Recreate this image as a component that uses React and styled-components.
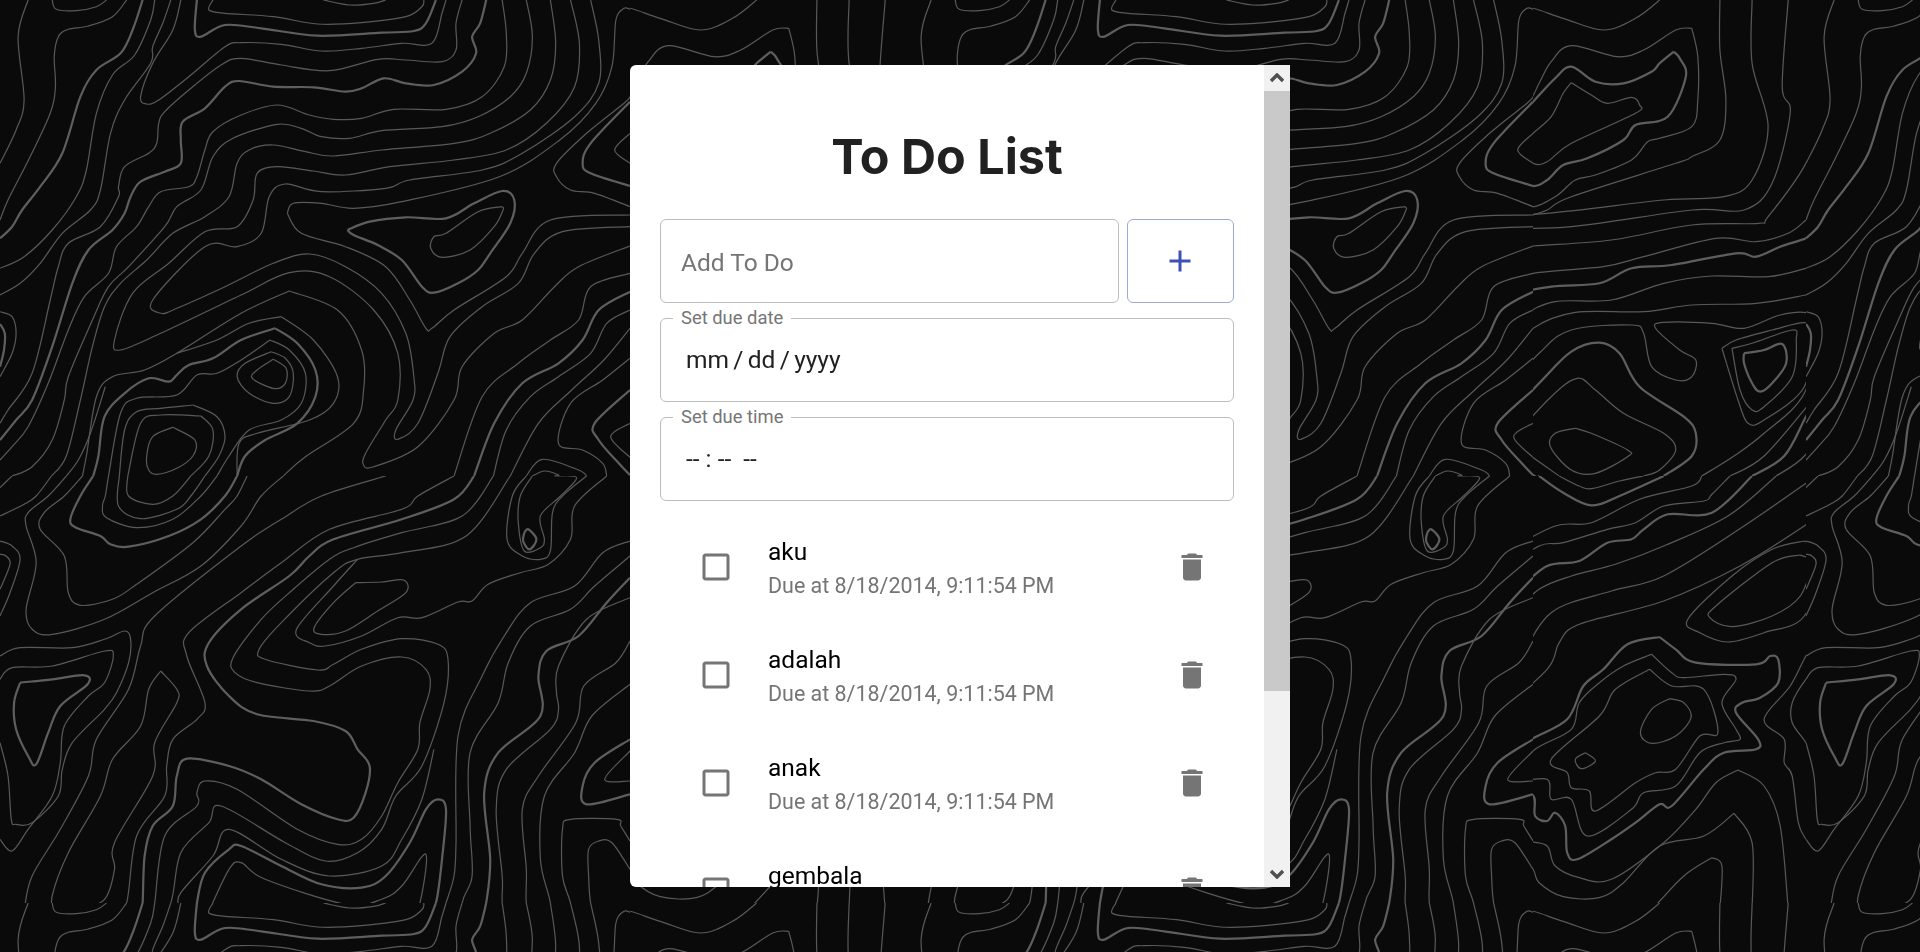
import React from "react";
import styled, { createGlobalStyle } from "styled-components";

// contour lines of the background, traced per crop. "*" marks the heavier lines
const TOPO_A = [
  "70,0 45,110 60,300 40,390 0,490",
  "130,0 140,28 190,32 240,20 265,0",
  "315,0 280,50 220,78 170,88 145,110 135,170 138,260 125,340 75,470 20,600 0,660",
  "*355,0 330,90 300,160 240,210 200,290 155,460 100,560 55,630 30,680 0,715",
  "385,0 375,60 335,165 280,225 240,340 215,510 190,590 130,690 60,770 0,805",
  "425,0 405,70 380,140 375,190 310,300 275,400 250,570 225,630 155,700 100,790 50,850 0,885",
  "450,0 430,90 380,190 350,290 365,312 395,300 470,230 560,140 600,128 700,133 800,153 900,145 1000,130 1075,130 1100,40 1110,0",
  "*490,0 485,90 500,110 560,75 650,85 790,107 950,98 1030,93 1060,70 1085,0",
  "530,0 520,30 560,40 680,50 790,72 900,68 1010,50 1050,20 1055,0",
  "805,0 870,15 930,10 960,0",
  "1150,0 1135,70 1135,150 1100,185 1010,180 940,178 820,212 700,195 600,175 550,195 470,270 410,335 395,370 390,430 370,460 310,500 295,560 295,590 250,680 170,730 145,800 125,900 80,1120 20,1230 0,1270",
  "*1210,0 1195,70 1175,110 1185,160 1150,215 1080,255 1010,250 955,235 900,265 860,275 780,262 680,260 595,243 560,260 510,325 455,365 450,420 450,490 410,515 350,545 325,590 310,640 280,690 220,750 180,850 130,1040 80,1200 40,1260 0,1320",
  "1250,0 1260,100 1255,200 1200,290 1110,328 980,328 900,355 830,358 770,345 690,315 600,345 530,395 510,450 490,530 470,560 400,575 370,620 340,680 290,740 270,820 210,890 170,990 120,1150 70,1280 30,1340 0,1380",
  "1310,0 1325,110 1310,220 1270,290 1190,350 1100,380 950,392 870,415 800,410 750,385 690,373 580,415 530,470 500,570 440,620 410,680 320,800 270,860 230,960 170,1130 160,1200 130,1320 80,1400 30,1428",
  "1370,0 1383,130 1370,240 1320,330 1220,400 1130,430 950,450 830,468 760,455 680,435 620,450 590,490 570,590 510,650 430,700 365,780 300,850 260,920 230,1040 200,1200 165,1368 128,1428",
  "262,1160 225,1300 195,1380 165,1428",
  "1420,0 1442,130 1430,260 1360,370 1260,450 1130,480 970,500 860,525 780,513 690,500 640,520 630,600 590,680 510,695 420,790 330,880 285,1020 300,1050 400,1000 600,885 720,818 820,830 930,930 990,1060 990,1200 960,1260 910,1360 905,1395 930,1400 1040,1340 1130,1200 1150,1100 1230,1000 1300,960 1380,860 1440,800 1568,738",
  "1470,0 1490,120 1490,250 1430,350 1300,460 1200,510 1020,540 960,565 800,575 710,552 670,590 650,700 590,740 510,740 380,900 400,940 440,925 560,860 680,790 770,762 860,800 950,880 1010,1000 1030,1130 1028,1200 985,1290 990,1318 1040,1270 1090,1120 1120,1010 1200,920 1290,850 1330,760 1400,695 1568,680",
  "*1568,305 1470,430 1450,490 1470,520 1568,558",
  "1568,400 1530,450 1568,490",
  "1568,620 1480,580 1420,570 1385,530 1385,490 1460,400 1553,310 1568,290",
  "715,640 730,610 800,610 880,625 1000,605 1243,530 1393,420 1483,310 1523,200 1533,60 1553,25 1568,28",
  "715,640 750,700 860,740 960,800 1020,900 1060,985 1075,985 1130,930 1260,830 1300,760 1370,660 1568,645",
  "720,873 600,940 440,1060 360,1110 280,1130 240,1190 215,1368 205,1428",
  "720,873 840,930 900,1050 905,1170 880,1270 760,1370 705,1428",
  "700,950 620,970 540,1020 440,1060",
  "700,950 780,1020 840,1130 830,1210 770,1260 640,1300 595,1330 590,1428",
  "*685,985 600,1020 530,1075 470,1095 440,1125 420,1145 370,1135 310,1180 260,1250 245,1368 232,1428",
  "*685,985 740,1030 785,1110 785,1190 740,1270 660,1320 610,1368 590,1428",
  "672,1020 600,1080 540,1120 490,1125 440,1185 340,1195 300,1240 270,1428",
  "672,1020 720,1050 760,1120 750,1210 700,1260 620,1290 570,1368 540,1428",
  "675,1055 610,1090 590,1130 620,1180 680,1210 720,1190 730,1120 710,1075 675,1055",
  "680,1078 640,1110 628,1135 680,1165 710,1150 712,1105 680,1078",
  "480,1215 400,1225 340,1235 310,1290 297,1428",
  "480,1215 540,1250 560,1310 545,1368 510,1428",
  "500,1248 400,1245 350,1270 318,1428",
  "500,1248 530,1290 520,1368 475,1428",
  "430,1282 380,1310 365,1368 370,1410 390,1423 440,1405 480,1368 485,1320 430,1282",
  "*865,690 920,665 1010,652 1110,655 1180,610 1250,573 1280,600 1270,670 1220,760 1190,810 1140,850 1080,878 1050,860 1000,780 940,735 880,705 865,690",
  "1250,620 1190,635 1110,700 1080,710 1072,745 1100,772 1170,750 1230,680 1252,630 1250,620",
  "0,935 30,950 40,1000 30,1060 0,1130",
  "*0,972 12,1000 10,1050 0,1100",
  "*1568,875 1490,930 1450,1020 1390,1090 1300,1150 1230,1270 1180,1428",
  "1568,820 1470,860 1440,960 1370,1020 1290,1090 1200,1190 1130,1428",
  "1568,930 1510,970 1470,1060 1390,1130 1320,1190 1260,1290 1228,1428",
  "1568,985 1503,1080 1423,1170 1340,1270 1270,1428",
  "1568,1075 1500,1140 1420,1210 1390,1330 1450,1350 1500,1390 1510,1428",
  "*1568,1170 1480,1270 1490,1320 1540,1390 1568,1425",
  "1568,1270 1520,1310 1568,1372",
  "1310,1428 1350,1378 1440,1410 1460,1428",
  "1325,1428 1355,1413 1390,1425 1380,1428",
];

const TOPO_B = [
  "*232,0 200,60 175,130 190,155 250,180 275,205 320,212 420,180 500,130 560,60 590,0",
  "0,420 25,350 50,250 30,210 0,195",
  "0,340 25,265 15,240 0,235",
  "0,35 30,0",
  "0,120 60,85 90,60 128,0",
  "205,0 160,60 110,110 100,160 160,240 170,350 200,388 280,370 340,325 480,200 560,100 590,60 615,0",
  "165,0 120,60 70,110 65,150 90,260 65,400 80,460 130,475 260,430 380,350 500,270 600,150 650,60 705,0",
  "318,0 320,60 380,85 430,60 475,0",
  "297,0 295,90 350,128 440,100 475,60 510,0",
  "270,0 262,60 255,90 265,125 340,155 430,130 500,60 540,0",
  "0,540 50,515 180,515 260,490 310,465 325,490 320,560 290,650 260,700 180,800 155,880 145,960 80,1040 40,1045 28,1030 20,900 0,800",
  "0,610 30,575 130,570 260,525 282,540 260,620 220,660 160,750 150,860 130,960 70,1060 30,1125 0,1090",
  "*50,620 130,610 210,598 218,625 150,690 120,770 90,865 70,840 40,760 35,680 50,620",
  "400,585 370,640 350,750 280,850 250,960 170,1130 130,1260 140,1295 190,1303 260,1270 285,1180 285,1100 380,900 385,800 440,680 440,640 400,585",
  "960,0 800,60 700,130 600,210 385,420 350,510 320,640 240,790 220,900 150,1060 80,1200 60,1300 45,1380 60,1428",
  "1130,0 1040,60 1000,100 820,160 700,260 600,350 470,470 465,540 510,680 490,730 430,790 415,870 410,960 340,1080 315,1281 280,1331 220,1359 170,1369 145,1391",
  "*1180,0 1130,70 1000,130 830,190 770,240 720,300 600,400 520,500 515,570 570,660 640,715 780,735 860,765 890,820 920,870 910,950 880,1025 840,1030 750,985 650,910 570,870 465,848 440,900 430,990 380,1050 360,1140 355,1281 350,1300 310,1428",
  "1228,0 1150,120 1000,170 880,215 820,250 730,340 650,430 580,545 585,590 640,620 770,645 820,630 900,570 1000,543 1060,580 1070,640 1045,740 1040,820 990,920 950,1020 900,1090 840,1105 740,1060 590,940 510,915 490,950 490,990 410,1080 385,1281 375,1341 335,1446",
  "1270,0 1160,180 1000,230 890,250 830,290 700,440 645,520 660,550 790,582 830,565 900,520 1000,488 1090,505 1115,550 1105,680 1050,870 985,960 950,1060 890,1130 810,1155 710,1100 550,990 520,1040 450,1130 425,1281 370,1428",
  "885,320 950,318 1005,312 1010,350 940,405 860,465 800,475 782,455 830,380 885,320",
  "1510,0 1430,90 1420,190 1365,265 1295,290 1215,325 1175,375 1140,378 1050,425 990,425 900,480 810,510 770,500 738,460 830,330 890,250",
  "*1305,170 1315,160 1335,190 1318,220 1302,195 1305,170",
  "1310,0 1275,60 1262,190 1300,240 1345,250 1370,225 1375,110 1400,60 1460,0",
  "1325,0 1295,60 1290,140 1305,225 1345,215 1355,190 1345,120 1395,60 1435,5 1380,0",
  "1568,195 1500,230 1430,330 1320,380 1255,480 1200,600 1140,780 1135,1100 1130,1200 1110,1281 1100,1321 1075,1411",
  "1568,240 1480,330 1420,400 1320,450 1265,560 1240,680 1170,830 1170,1050 1175,1200 1150,1281 1135,1428",
  "*1568,305 1510,380 1440,480 1360,525 1340,600 1345,720 1240,830 1205,950 1220,1150 1210,1281 1195,1351 1175,1391",
  "1568,365 1460,430 1390,570 1385,650 1390,700 1370,760 1260,880 1235,1000 1250,1200 1250,1281 1260,1381",
  "1568,495 1533,560 1453,630 1433,740 1340,900 1300,1000 1310,1180 1310,1281 1325,1391",
  "1568,625 1473,720 1430,830 1355,960 1345,1150 1370,1281 1383,1411",
  "*1568,790 1480,860 1450,930 1460,985 1568,955",
  "1568,825 1505,910 1568,915",
  "1568,1095 1545,1050 1535,1030 1420,1030 1400,1060 1400,1200 1420,1281 1442,1411",
  "1568,1180 1523,1100 1490,1095 1465,1120 1465,1200 1470,1281 1490,1401",
  "1568,1295 1545,1320 1550,1428",
  "*480,1370 500,1380 550,1350 800,1375 1020,1365 1060,1330 1085,1281 1100,1150 1110,1000 1090,970 1060,1000 1020,1100 960,1200 900,1235 800,1225 700,1170 600,1110 570,1120 510,1190 490,1281 480,1370",
  "520,1305 700,1320 800,1345 1000,1325 1040,1300 1060,1135 1000,1230 950,1270 860,1285 660,1210 600,1160 570,1180 520,1305",
  "445,1290 450,1250 530,1140 570,1060 700,1150 820,1200 950,1170 1000,1090 1050,970 1080,820",
  "540,1428 600,1400 800,1410 1075,1411",
];

const TOPO_C = [
  "560,200 570,60 590,22 680,55 780,90 860,55 920,0",
  "1000,85 960,90 880,150 815,170 700,137 650,185 620,250 590,310 500,390 410,520 440,570 500,580 590,622 660,590 710,540 760,525 850,480 890,425 920,415 1000,380 1015,300 1015,170 1000,85",
  "*955,155 920,190 900,215 830,250 760,245 700,200 660,235 605,305 507,430 480,490 520,530 600,558 640,540 680,495 740,475 830,420 860,375 940,350 985,230 970,175 955,155",
  "700,248 680,280 650,350 605,400 560,450 605,490 640,485 700,430 860,340 870,315 850,292 790,310 750,285 700,248",
  "1070,0 1070,150 1085,300 1070,420 1000,470 960,490 700,590 640,630 590,650",
  "1150,0 1150,190 1190,380 1150,540 1080,590 930,600 640,640 410,652",
  "1240,0 1225,260 1245,340 1200,550 1130,630 1000,630 700,680 500,685",
  "1354,0 1330,110 1345,300 1284,490 1190,650 1165,670 1000,675 800,720 605,738 500,750",
  "1284,660 1240,700 1160,725 1060,715 880,770 780,800 605,820 510,860 480,900 470,970 430,1030 360,1070",
  "*1300,700 1284,715 1220,740 1160,770 1110,760 950,795 850,805 770,850 650,860 560,890 490,990 480,1040 400,1100",
  "1300,800 1284,805 1190,830 1050,828 930,850 800,900 660,905 580,950 530,1040 480,1100",
  "1300,880 1284,885 1160,910 1000,915 880,935 710,937 605,985 540,1080 460,1170",
  "500,1220 620,1060 700,990 850,975 880,1000 900,1100 960,1140 1000,1130 1010,1080 970,1050 910,985 930,967 1050,970 1130,985 1220,945 1290,940 1312,985 1280,1180 1180,1300 1105,1368 1025,1428",
  "1075,1045 1110,1020 1200,990 1280,968 1295,1000 1280,1160 1180,1260 1140,1270 1115,1200 1075,1045",
  "1100,1045 1150,1030 1250,990 1260,1020 1250,1130 1180,1220 1150,1230 1120,1170 1100,1045",
  "*1130,1060 1180,1050 1225,1032 1235,1090 1200,1150 1170,1175 1150,1150 1130,1090 1130,1060",
  "*510,1290 620,1150 700,1055 770,1028 820,1060 870,1160 980,1250 1010,1300 1000,1368 930,1428",
  "*510,1290 520,1340 605,1425 620,1428",
  "550,1320 650,1190 715,1135 760,1170 830,1240 930,1300 960,1350 920,1410 880,1428",
  "550,1320 590,1360 670,1428",
  "710,1285 660,1300 648,1340 700,1410 760,1420 840,1370 840,1350 750,1300 710,1285",
  "*1340,1120 1284,1250 1230,1368 1150,1428",
  "1300,1200 1180,1368 1095,1428",
  "1340,1250 1280,1368 1210,1428",
  "1400,1250 1365,1368 1310,1428",
];

const TOPO_D = [
  "*620,0 680,50 750,88 820,60 930,0",
  "670,0 720,30 750,38 820,15 880,0",
  "*1150,0 1050,110 940,115 880,160 850,190 790,200 720,255 640,270 570,340",
  "1210,0 1090,120 930,210 810,265 700,300 620,340 540,430",
  "1095,0 1050,55 1030,75 930,90 860,140 790,160 680,200 620,210 520,290",
  "1025,0 1000,30 870,70 750,140 660,150 530,230",
  "1310,0 1130,150 930,300 800,345 650,410 570,560",
  "1330,100 1280,150 1120,270 930,375 720,445 670,500 640,580 510,720",
  "*920,483 840,505 780,580 730,630 690,730 600,790 510,860 478,940 500,990 600,955 610,1020 640,1035 660,1010 685,1050 690,1130 715,1150 800,1090 860,1040 920,985 950,990 1030,880 1080,830 1160,820 1165,790 1110,710 1125,680 1170,665 1215,620 1215,550 1195,540 1160,565 1010,560 960,520 920,483",
  "900,535 830,570 770,620 720,680 700,760 610,820 535,910 560,918 640,910 650,970 700,970 740,1080 850,1000 880,950 960,930 1020,830 1080,800 1120,790 1110,760 1075,680 1110,610 1080,595 980,605 950,590 900,535",
  "895,580 810,640 770,720 650,850 690,890 700,935 745,945 760,1005 860,920 910,890 960,880 1020,780 1065,770 1030,640 950,630 895,580",
  "945,668 900,700 872,770 900,802 960,780 998,725 980,680 945,668",
  "735,830 710,850 725,878 760,855 735,830",
  "1300,530 1284,540 1245,630 1180,730 1230,790 1230,860 1250,900 1265,1040 1284,1090",
  "1300,600 1284,610 1250,680 1250,740 1284,800 1300,850",
  "1280,195 1200,220 1100,300 990,430 1020,470 1090,498 1180,470 1280,420 1320,240 1280,195",
  "1270,237 1200,260 1060,390 1045,425 1100,452 1200,420 1270,360 1295,260 1270,237",
  "1115,882 1060,920 1010,1000 930,1100 800,1210 720,1205 660,1170 640,1110 590,1090 570,1030 440,1030",
  "1115,882 1180,930 1220,1050 1240,1300",
  "1105,1012 1030,1080 920,1110 830,1220 770,1265 680,1262 620,1220 605,1180 560,1100 510,1095",
  "1105,1012 1150,1100 1150,1300",
  "1050,1145 980,1200 900,1300 860,1330 780,1360 690,1325 590,1295",
  "1050,1145 1075,1170 1070,1300",
];

const SX = 1568 / 630;

const toPath = (line, ox, oy) => {
  const heavy = line[0] === "*";
  const pts = line
    .replace("*", "")
    .split(" ")
    .map(p => {
      const [x, y] = p.split(",").map(Number);
      return [ox + x / SX, oy + y / 3];
    });
  let d = `M${pts[0][0].toFixed(1)} ${pts[0][1].toFixed(1)}`;
  for (let i = 0; i < pts.length - 1; i++) {
    const a = pts[i - 1] || pts[i];
    const b = pts[i];
    const c = pts[i + 1];
    const e = pts[i + 2] || c;
    const c1 = [b[0] + (c[0] - a[0]) / 6, b[1] + (c[1] - a[1]) / 6];
    const c2 = [c[0] - (e[0] - b[0]) / 6, c[1] - (e[1] - b[1]) / 6];
    d += `C${c1[0].toFixed(1)} ${c1[1].toFixed(1)} ${c2[0].toFixed(1)} ${c2[1].toFixed(1)} ${c[0].toFixed(1)} ${c[1].toFixed(1)}`;
  }
  return { d, heavy };
};

const TILES = [
  { lines: TOPO_A, ox: 0, oy: 0, box: [0, 0, 630, 476] },
  { lines: TOPO_B, ox: 0, oy: 476, box: [0, 476, 630, 427] },
  { lines: TOPO_C, ox: 387, oy: 0, box: [630, 0, 273, 476] },
  { lines: TOPO_D, ox: 387, oy: 476, box: [630, 476, 273, 427] },
];

const todos = ["aku", "adalah", "anak", "gembala"];

const GlobalStyle = createGlobalStyle`
  html, body {
    margin: 0;
    height: 100%;
    overflow: hidden;
    background: #0a0a0a;
    font-family: Roboto, "Liberation Sans", sans-serif;
  }
  * {
    box-sizing: border-box;
  }
`;

const Backdrop = styled.svg`
  position: fixed;
  inset: 0;
  width: 100%;
  height: 100%;
`;

const Page = styled.main`
  position: relative;
  height: 100vh;
  display: flex;
  align-items: center;
  justify-content: center;
`;

const Card = styled.section`
  width: 660px;
  height: 822px;
  display: flex;
  background: #fff;
  border-radius: 6px 0 0 6px;
  overflow: hidden;
`;

const Content = styled.div`
  flex: 1;
  min-width: 0;
  padding: 65px 30px 0;
  overflow: hidden;
`;

const Title = styled.h1`
  margin: 0 0 35px;
  font-family: Inter, sans-serif;
  font-size: 48.5px;
  line-height: 54px;
  font-weight: 700;
  text-align: center;
  color: #212121;
`;

const AddRow = styled.div`
  display: flex;
  gap: 8px;
  margin-bottom: 15px;
`;

const AddInput = styled.input`
  flex: 1;
  min-width: 0;
  height: 84px;
  padding: 2px 20px 0;
  border: 1px solid #bdbdbd;
  border-radius: 6px;
  outline: none;
  font-family: Roboto, sans-serif;
  font-size: 24.5px;
  color: #212121;
  background: #fff;
  &::placeholder {
    color: #757575;
    opacity: 1;
  }
`;

const AddButton = styled.button`
  width: 107px;
  height: 84px;
  display: flex;
  align-items: center;
  justify-content: center;
  padding: 0 2px 0 0;
  border: 1px solid #9fa8da;
  border-radius: 6px;
  background: #fff;
  color: #3f51b5;
`;

const Field = styled.div`
  position: relative;
  height: 84px;
  display: flex;
  align-items: center;
  padding: 0 25px;
  border: 1px solid #bdbdbd;
  border-radius: 6px;
  margin-bottom: 15px;
`;

const FieldLabel = styled.label`
  position: absolute;
  top: -12px;
  left: 12px;
  padding: 0 8px;
  background: #fff;
  font-size: 18.4px;
  line-height: 21px;
  color: #757575;
`;

const FieldValue = styled.span`
  font-size: 24.5px;
  line-height: 28px;
  color: #212121;
  white-space: pre;
  word-spacing: ${p => (p.$tight ? "-1.75px" : "0")};
`;

const List = styled.ul`
  list-style: none;
  margin: -3px 0 0;
  padding: 0 24px 0 38px;
`;

const Item = styled.li`
  height: 108px;
  display: flex;
  align-items: center;
`;

const ItemIcon = styled.svg`
  width: 36px;
  height: 36px;
  flex: none;
  fill: #757575;
`;

const ItemText = styled.div`
  flex: 1;
  padding: 3px 0 0 34px;
`;

const ItemName = styled.div`
  font-size: 24.5px;
  line-height: 32px;
  color: #000;
`;

const ItemDue = styled.div`
  margin-top: 1px;
  font-size: 21.44px;
  line-height: 33px;
  color: #757575;
`;

const Scrollbar = styled.div`
  width: 26px;
  flex: none;
  display: flex;
  flex-direction: column;
  background: #f1f1f1;
`;

const ScrollButton = styled.div`
  height: 26px;
  display: flex;
  align-items: center;
  justify-content: center;
  color: #505050;
`;

const ScrollTrack = styled.div`
  flex: 1;
`;

const ScrollThumb = styled.div`
  height: 600px;
  background: #c9c9c9;
`;

const Chevron = ({ down }) => (
  <svg width="14" height="10" viewBox="0 0 14 10">
    <path
      d={down ? "M1 2 7 8 13 2" : "M1 8 7 2 13 8"}
      fill="none"
      stroke="currentColor"
      strokeWidth="3.4"
    />
  </svg>
);

function Topography() {
  return (
    <Backdrop aria-hidden="true">
      <defs>
        <pattern id="topo" width="903" height="903" patternUnits="userSpaceOnUse">
          {TILES.map(t => (
            <svg
              key={t.box.join()}
              x={t.box[0]}
              y={t.box[1]}
              width={t.box[2]}
              height={t.box[3]}
              viewBox={t.box.join(" ")}
            >
              {t.lines.map(l => {
                const { d, heavy } = toPath(l, t.ox, t.oy);
                return (
                  <path
                    key={l}
                    d={d}
                    fill="none"
                    stroke={heavy ? "#5e5e5e" : "#585858"}
                    strokeWidth={heavy ? 2.2 : 1.2}
                  />
                );
              })}
            </svg>
          ))}
        </pattern>
      </defs>
      <rect width="100%" height="100%" fill="#0a0a0a" />
      <rect width="100%" height="100%" fill="url(#topo)" />
    </Backdrop>
  );
}

export default function App() {
  return (
    <>
      <GlobalStyle />
      <Topography />
      <Page>
        <Card>
          <Content>
            <Title>To Do List</Title>
            <AddRow>
              <AddInput placeholder="Add To Do" />
              <AddButton aria-label="add">
                <svg width="36" height="36" viewBox="0 0 24 24" fill="currentColor">
                  <path d="M19 13h-6v6h-2v-6H5v-2h6V5h2v6h6v2z" />
                </svg>
              </AddButton>
            </AddRow>
            <Field>
              <FieldLabel>Set due date</FieldLabel>
              <FieldValue $tight>mm / dd / yyyy</FieldValue>
            </Field>
            <Field>
              <FieldLabel>Set due time</FieldLabel>
              <FieldValue>{"-- : --  --"}</FieldValue>
            </Field>
            <List>
              {todos.map(t => (
                <Item key={t}>
                  <ItemIcon viewBox="0 0 24 24">
                    <path d="M19 5v14H5V5h14m0-2H5c-1.1 0-2 .9-2 2v14c0 1.1.9 2 2 2h14c1.1 0 2-.9 2-2V5c0-1.1-.9-2-2-2z" />
                  </ItemIcon>
                  <ItemText>
                    <ItemName>{t}</ItemName>
                    <ItemDue>Due at 8/18/2014, 9:11:54 PM</ItemDue>
                  </ItemText>
                  <ItemIcon viewBox="0 0 24 24">
                    <path d="M6 19c0 1.1.9 2 2 2h8c1.1 0 2-.9 2-2V7H6v12zM19 4h-3.5l-1-1h-5l-1 1H5v2h14V4z" />
                  </ItemIcon>
                </Item>
              ))}
            </List>
          </Content>
          <Scrollbar>
            <ScrollButton>
              <Chevron />
            </ScrollButton>
            <ScrollThumb />
            <ScrollTrack />
            <ScrollButton>
              <Chevron down />
            </ScrollButton>
          </Scrollbar>
        </Card>
      </Page>
    </>
  );
}
